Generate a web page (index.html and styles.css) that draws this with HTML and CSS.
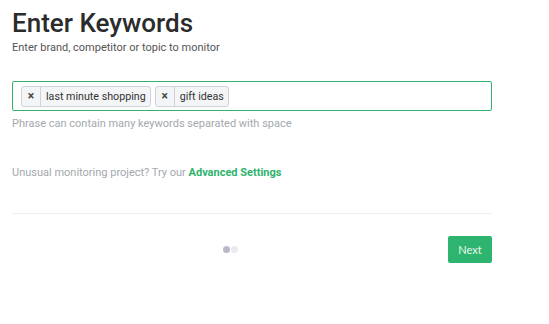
FILE: index.html
```html
<!DOCTYPE html>
<html>
<head>
<meta charset="utf-8">
<link rel="stylesheet" href="styles.css">
</head>
<body>
<div class="wizard">
  <h1 class="title">Enter Keywords</h1>
  <p class="subtitle">Enter brand, competitor or topic to monitor</p>
  <div class="tag-input">
    <span class="tag"><span class="tag-x">×</span><span class="tag-label">last minute shopping</span></span>
    <span class="tag"><span class="tag-x">×</span><span class="tag-label">gift ideas</span></span>
  </div>
  <p class="hint">Phrase can contain many keywords separated with space</p>
  <p class="advanced">Unusual monitoring project? Try our <a class="link" href="#">Advanced Settings</a></p>
  <div class="divider"></div>
  <div class="footer">
    <div class="dots"><span class="dot dot-active"></span><span class="dot"></span></div>
    <button class="next">Next</button>
  </div>
</div>
</body>
</html>
```
FILE: styles.css
```css
* { box-sizing: border-box; }
body {
  margin: 0;
  background: #fff;
  font-family: Roboto, "Noto Sans", sans-serif;
}
.wizard {
  width: 480px;
  margin-left: 12px;
  padding-top: 7px;
}
.title {
  margin: 0;
  font-size: 26px;
  font-weight: 500;
  color: #2b2b2b;
  line-height: 32px;
}
.subtitle {
  margin: 2px 0 0;
  font-size: 11px;
  line-height: 14px;
  color: #555;
}
.tag-input {
  margin-top: 26px;
  height: 30px;
  border: 1px solid #33b06e;
  border-radius: 2px;
  display: flex;
  align-items: center;
  gap: 4px;
  padding-left: 8px;
}
.tag {
  display: inline-flex;
  height: 21px;
  border: 1px solid #cfd2d6;
  border-radius: 3px;
  background: #f4f5f6;
  font-size: 10.7px;
  color: #333;
  align-items: stretch;
}
.tag-x {
  width: 19px;
  display: flex;
  align-items: center;
  justify-content: center;
  border-right: 1px solid #cfd2d6;
  font-size: 12px;
  font-weight: 700;
  color: #444;
}
.tag-label {
  display: flex;
  align-items: center;
  padding: 0 4px 0 5px;
}
.hint {
  margin: 6px 0 0;
  font-size: 11px;
  line-height: 14px;
  color: #a3a8ae;
}
.advanced {
  margin: 35px 0 0;
  font-size: 11px;
  line-height: 14px;
  color: #a3a8ae;
}
.link {
  color: #2db36e;
  font-weight: 700;
  text-decoration: none;
}
.divider {
  margin-top: 33px;
  height: 1px;
  background: #eeeeee;
}
.footer {
  margin-top: 22px;
  display: flex;
  align-items: center;
  justify-content: flex-end;
  position: relative;
  height: 27px;
}
.dots {
  position: absolute;
  left: 211px;
  top: 10px;
  display: flex;
  gap: 1px;
}
.dot {
  width: 7px;
  height: 7px;
  border-radius: 50%;
  background: #ebebef;
}
.dot-active { background: #b9b9cb; }
.next {
  width: 44px;
  height: 27px;
  border: 0;
  border-radius: 2px;
  background: #2db46e;
  color: #eaf7ef;
  font-family: Lato, Roboto, sans-serif;
  font-size: 11px;
  padding: 0;
}
```
